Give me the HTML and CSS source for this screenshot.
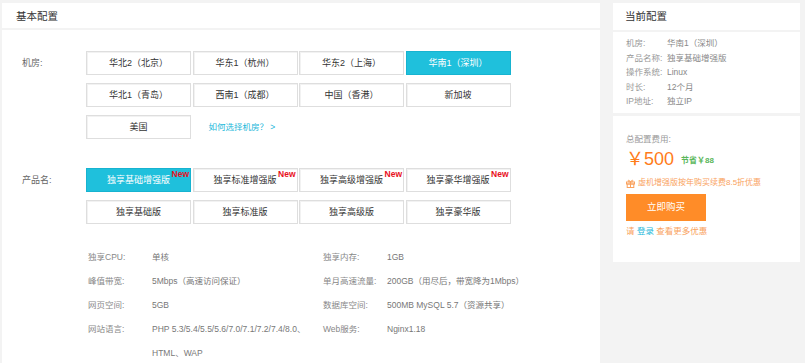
FILE: index.html
```html
<!DOCTYPE html>
<html lang="zh-CN">
<head>
<meta charset="utf-8">
<title>基本配置</title>
<link rel="stylesheet" href="styles.css">
</head>
<body>
<div class="page">
  <div class="main">
    <div class="main-head">基本配置</div>
    <div class="main-body">
      <div class="field">
        <div class="field-label">机房:</div>
        <div class="opts">
          <div class="opt">华北2（北京）</div>
          <div class="opt">华东1（杭州）</div>
          <div class="opt">华东2（上海）</div>
          <div class="opt active">华南1（深圳）</div>
          <div class="opt">华北1（青岛）</div>
          <div class="opt">西南1（成都）</div>
          <div class="opt">中国（香港）</div>
          <div class="opt">新加坡</div>
          <div class="opt">美国</div>
          <div class="help"><a class="link" href="#">如何选择机房？ &gt;</a></div>
        </div>
      </div>
      <div class="field product">
        <div class="field-label">产品名:</div>
        <div class="opts">
          <div class="opt active">独享基础增强版<span class="new">New</span></div>
          <div class="opt">独享标准增强版<span class="new">New</span></div>
          <div class="opt">独享高级增强版<span class="new">New</span></div>
          <div class="opt">独享豪华增强版<span class="new">New</span></div>
          <div class="opt">独享基础版</div>
          <div class="opt">独享标准版</div>
          <div class="opt">独享高级版</div>
          <div class="opt">独享豪华版</div>
        </div>
      </div>
      <div class="specs">
        <div class="sk">独享CPU:</div><div class="sv">单核</div>
        <div class="sk">独享内存:</div><div class="sv">1GB</div>
        <div class="sk">峰值带宽:</div><div class="sv">5Mbps（高速访问保证）</div>
        <div class="sk">单月高速流量:</div><div class="sv">200GB（用尽后，带宽降为1Mbps）</div>
        <div class="sk">网页空间:</div><div class="sv">5GB</div>
        <div class="sk">数据库空间:</div><div class="sv">500MB MySQL 5.7（资源共享）</div>
        <div class="sk">网站语言:</div><div class="sv">PHP 5.3/5.4/5.5/5.6/7.0/7.1/7.2/7.4/8.0、<br>HTML、WAP</div>
        <div class="sk">Web服务:</div><div class="sv">Nginx1.18</div>
      </div>
    </div>
  </div>
  <div class="side">
    <div class="card side-head">当前配置</div>
    <div class="card side-info">
      <div class="irow"><span class="ik">机房:</span><span class="iv">华南1（深圳）</span></div>
      <div class="irow"><span class="ik">产品名称:</span><span class="iv">独享基础增强版</span></div>
      <div class="irow"><span class="ik">操作系统:</span><span class="iv">Linux</span></div>
      <div class="irow"><span class="ik">时长:</span><span class="iv">12个月</span></div>
      <div class="irow"><span class="ik">IP地址:</span><span class="iv">独立IP</span></div>
    </div>
    <div class="card side-buy">
      <div class="total-label">总配置费用:</div>
      <div class="price-row"><span class="price">￥500</span><span class="save">节省￥88</span></div>
      <div class="promo">
        <svg class="gift" width="9" height="9" viewBox="0 0 9 9" fill="none" stroke="#f9a25e" stroke-width="1">
          <rect x="0.5" y="3" width="8" height="2"/>
          <rect x="1.2" y="5" width="6.6" height="3.5"/>
          <line x1="4.5" y1="3" x2="4.5" y2="8.5"/>
          <path d="M4.5 3 C3.5 1 2 0.8 2 2 C2 2.7 3 3 4.5 3 C6 3 7 2.7 7 2 C7 0.8 5.5 1 4.5 3"/>
        </svg>
        <span>虚机增强版按年购买续费8.5折优惠</span>
      </div>
      <div class="buy-btn">立即购买</div>
      <div class="login-tip">请 <a class="link" href="#">登录</a> 查看更多优惠</div>
    </div>
  </div>
</div>
</body>
</html>
```

FILE: styles.css
```css
* { box-sizing: border-box; }
html, body { margin: 0; padding: 0; }
body {
  background: #f3f3f3;
  font-family: "Liberation Sans", "Noto Sans CJK SC", sans-serif;
  color: #333;
  width: 805px;
  height: 363px;
  overflow: hidden;
}
a { text-decoration: none; }
.link { color: #1cb8da; }

.page {
  display: flex;
  gap: 13px;
  padding: 3px 0 0 2px;
  height: 363px;
}

.main {
  width: 598px;
  background: #fff;
  height: 360px;
}
.main-head {
  height: 27px;
  line-height: 27px;
  padding-left: 14px;
  font-size: 10.5px;
  color: #333;
  border-bottom: 2px solid #f3f3f3;
}
.main-body {
  padding: 21px 0 0 20px;
}

.field { display: flex; }
.field-label {
  width: 64px;
  line-height: 24px;
  font-size: 9px;
  color: #666;
}
.opts {
  display: grid;
  grid-template-columns: repeat(4, 105px);
  grid-auto-rows: 24px;
  column-gap: 1.5px;
  row-gap: 8px;
}
.opt {
  position: relative;
  border: 1px solid #dedede;
  box-shadow: inset 1px 1px 0 #f2f2f2;
  text-align: center;
  line-height: 22px;
  font-size: 9px;
  color: #333;
  background: #fff;
}
.opt.active {
  background: #1fc0dc;
  border-color: #17b3d0;
  box-shadow: none;
  color: #fff;
}
.new {
  position: absolute;
  top: 0;
  right: 1px;
  line-height: 10px;
  font-size: 8.5px;
  font-weight: bold;
  color: #e8101c;
}
.help {
  padding-left: 16px;
  line-height: 24px;
  font-size: 8.5px;
}
.product { margin-top: 29px; }

.specs {
  margin-top: 21px;
  padding-left: 66px;
  display: grid;
  grid-template-columns: 64px 171px 64px 1fr;
  grid-auto-rows: 24px;
  font-size: 8.5px;
  line-height: 24px;
}
.sk { color: #888; white-space: nowrap; }
.sv { color: #777; white-space: nowrap; }

.side {
  width: 187px;
  display: flex;
  flex-direction: column;
}
.card { background: #fff; }
.side-head {
  height: 27px;
  line-height: 27px;
  padding-left: 12px;
  font-size: 10.5px;
  color: #333;
}
.side-info {
  margin-top: 2px;
  padding: 4px 13px;
  height: 81px;
}
.irow {
  display: flex;
  line-height: 14.6px;
  font-size: 8.5px;
}
.ik { width: 41px; color: #999; white-space: nowrap; }
.iv { color: #888; white-space: nowrap; }

.side-buy {
  margin-top: 3px;
  height: 146px;
  padding: 16px 13px 0;
}
.total-label {
  line-height: 14px;
  font-size: 8.5px;
  color: #999;
}
.price-row {
  margin-top: 2px;
  height: 22px;
  display: flex;
  align-items: center;
}
.price {
  font-size: 18px;
  color: #ff7c1a;
  line-height: 22px;
}
.save {
  margin-left: 7px;
  font-size: 8px;
  font-weight: bold;
  color: #5bb75b;
}
.promo {
  margin-top: 6px;
  display: flex;
  align-items: center;
  gap: 3px;
  line-height: 14px;
  font-size: 8px;
  color: #f9a25e;
  white-space: nowrap;
}
.gift { flex: none; }
.buy-btn {
  margin-top: 4px;
  width: 80px;
  height: 26.5px;
  line-height: 26.5px;
  background: #ff8c28;
  color: #fff;
  text-align: center;
  font-size: 9.5px;
}
.login-tip {
  margin-top: 3.5px;
  line-height: 14px;
  font-size: 8.5px;
  color: #f9a25e;
}
```
